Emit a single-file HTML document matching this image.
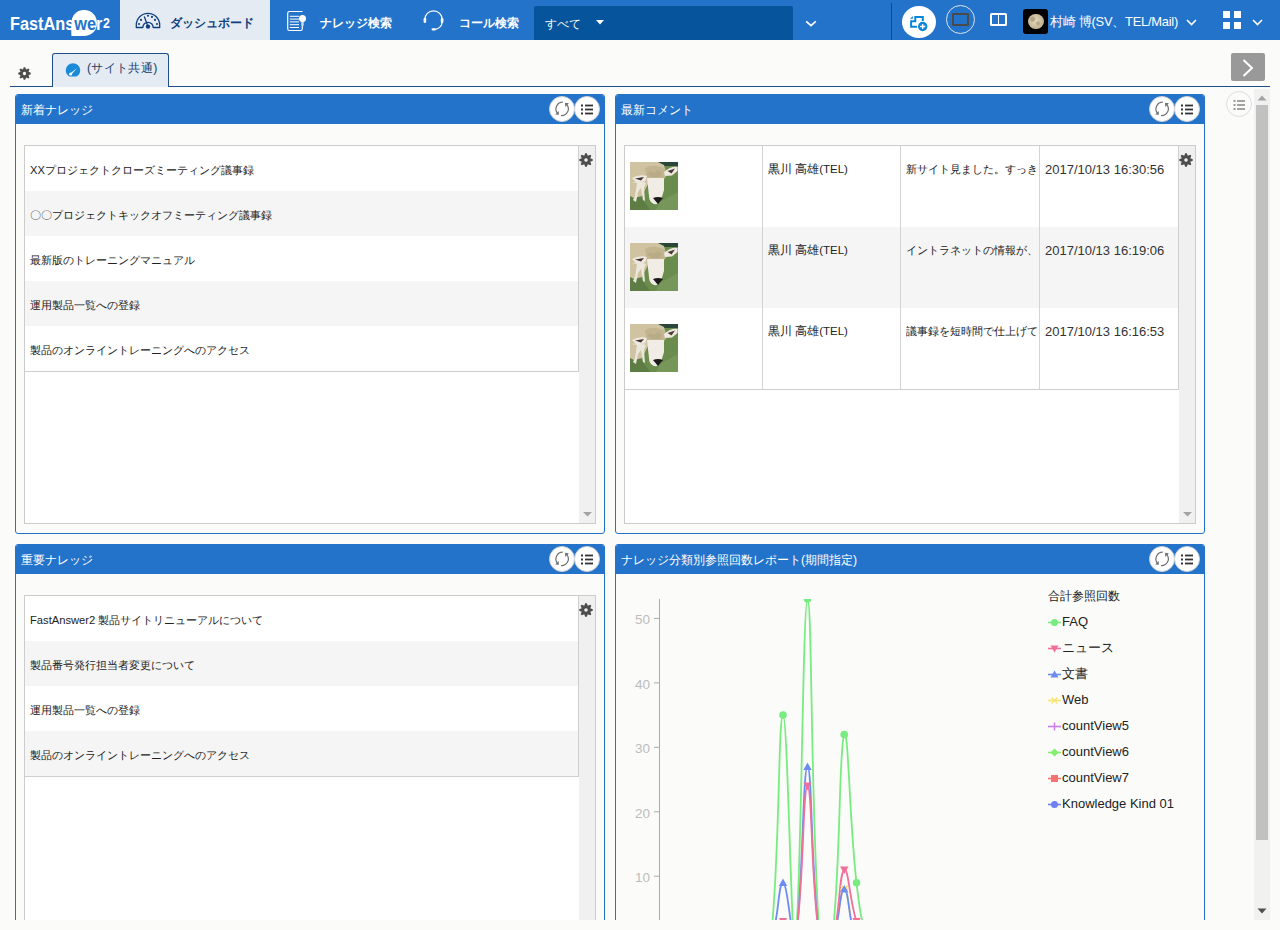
<!DOCTYPE html>
<html><head><meta charset="utf-8">
<style>
*{box-sizing:border-box;margin:0;padding:0}
html,body{width:1280px;height:930px;overflow:hidden;background:#fbfbf9;font-family:"Liberation Sans",sans-serif;font-size:12px;color:#222}
.abs{position:absolute}
#hdr{position:absolute;left:0;top:0;width:1280px;height:40px;background:#2473ca}
#logo{left:0;top:0;width:120px;height:40px;background:#2473ca}
#dash{left:120px;top:0;width:150px;height:40px;background:#e4ebf3}
.navtxt{font-size:12.2px;font-weight:bold;color:#fff;white-space:nowrap}
#sel{left:534px;top:6px;width:259px;height:34px;background:#06549b;border-radius:2px 2px 0 0}
#tabline{left:10px;top:86px;width:1260px;height:1px;background:#1d4e87}
#tab{z-index:2;left:52px;top:53px;width:117px;height:34px;background:#e4ebf3;border:1px solid #1d4e87;border-bottom:none;border-radius:3px 3px 0 0}
#rbtn{left:1231px;top:53px;width:34px;height:28px;background:#999;border-radius:2px}
.panel{position:absolute;border:1px solid #2473ca;border-radius:3px;background:#fbfbf9;overflow:hidden}
.ph{position:absolute;left:0;top:0;right:0;height:29px;background:#2473ca;color:#fff;font-size:12.2px;line-height:30.5px;padding-left:5px;white-space:nowrap}
.cbtn{position:absolute;width:26px;height:26px;border-radius:50%;background:#fff;border:1px solid #cfcfcf}
.box{position:absolute;background:#fff;border:1px solid #ccc}
.row{position:absolute;left:0;height:45px;line-height:48px;padding-left:5px;font-size:11.2px;color:#222;white-space:nowrap}
.row.g{background:#f5f5f5}
.ct{font-size:11.6px;color:#222;white-space:nowrap}
.sb{position:absolute;top:0;bottom:0;width:16px;background:#f0f0f0}
</style></head><body>
<div id="hdr"></div>
<div class="abs" id="logo">
 <svg class="abs" style="left:0;top:0" width="120" height="40"><path d="M84 10 C92 10 97 16 97 23 C97 31 91 36 84 36 L71.5 36 C71 32 71.5 27 71.5 23 C71.5 16 76 10 84 10Z" fill="#fff"/></svg>
 <div class="abs" id="logotxt" style="left:9.5px;top:14px;font-size:18px;line-height:20px;font-weight:bold;color:#fff;white-space:nowrap;transform-origin:0 0;transform:scaleX(0.905)">FastAns<span style="color:#2473ca">we</span>r</div>
 <div class="abs" style="left:102.5px;top:15.5px;font-size:14.5px;line-height:14px;transform:scaleX(0.85);transform-origin:0 0;font-weight:bold;color:#fff">2</div>
</div>
<div class="abs" id="dash">
 <svg class="abs" style="left:15px;top:12px" width="26" height="18" viewBox="0 0 26 18"><path d="M1.3 15.5 V13 A11.7 11.7 0 0 1 24.7 13 V15.5 H18.2 A5.2 5.2 0 0 0 7.8 15.5 Z" fill="none" stroke="#0d3f7e" stroke-width="1.3" stroke-linejoin="round"/><circle cx="13" cy="14.6" r="2.2" fill="#0d3f7e"/><path d="M9.3 4.5 L13 14.6" stroke="#0d3f7e" stroke-width="1.3"/><circle cx="4" cy="12" r="1.05" fill="#0d3f7e"/><circle cx="6" cy="7.9" r="1.05" fill="#0d3f7e"/><circle cx="13" cy="3.8" r="1.05" fill="#0d3f7e"/><circle cx="17" cy="4.9" r="1.05" fill="#0d3f7e"/><circle cx="20" cy="7.9" r="1.05" fill="#0d3f7e"/><circle cx="22" cy="12" r="1.05" fill="#0d3f7e"/></svg>
 <div class="abs navtxt" style="left:50px;top:14.5px;font-size:12.4px;color:#0d3f7e">ダッシュボード</div>
</div>
<svg class="abs" style="left:280px;top:5px" width="30" height="30" viewBox="280 5 30 30"><path d="M302.5 11.5 H289.5 Q287.7 11.5 287.7 13.3 V28.7 Q287.7 30.5 289.5 30.5 H300.5 Q302.3 30.5 302.3 28.7 V26" fill="none" stroke="#fff" stroke-width="1.2"/><path d="M289.8 16.3H299M289.8 19.1H299M289.8 21.9H299M289.8 24.7H299M289.8 27.5H299" stroke="#fff" stroke-width="1"/><path d="M301.3 21 H303.7 V25.5 Q302.5 26.5 301.3 25.5Z" fill="#c9dcf2"/><circle cx="302.5" cy="18.4" r="3.5" fill="#fff"/></svg>
<div class="abs navtxt" style="left:320px;top:14.5px">ナレッジ検索</div>
<svg class="abs" style="left:420px;top:5px" width="28" height="30" viewBox="420 5 28 30"><path d="M424.8 19.5 A8.7 8.7 0 0 1 442.2 19.5 V22 A8.5 8.5 0 0 1 435.5 29.3" fill="none" stroke="#fff" stroke-width="1.3"/><rect x="423.6" y="18" width="2.6" height="5" rx="1.2" fill="#fff"/><rect x="440.8" y="18" width="2.6" height="5" rx="1.2" fill="#fff"/><rect x="431.5" y="28.2" width="4.5" height="2.2" rx="1.1" fill="#fff"/></svg>
<div class="abs navtxt" style="left:459px;top:15px">コール検索</div>
<div class="abs" id="sel">
 <div class="abs" style="left:11px;top:10px;font-size:12.2px;color:#fff;white-space:nowrap">すべて</div>
 <svg class="abs" style="left:62px;top:14px" width="8" height="5"><path d="M0 0H8L4 4.5Z" fill="#fff"/></svg>
</div>
<svg class="abs" style="left:805px;top:20px" width="12" height="8"><path d="M1.2 1.3L6 5.6L10.8 1.3" fill="none" stroke="#fff" stroke-width="1.7"/></svg>
<div class="abs" style="left:891px;top:3px;width:1px;height:37px;background:#124a86"></div>
<div class="abs" style="left:902px;top:5.5px;width:34px;height:32.5px;border-radius:50%;background:#fff"></div>
<svg class="abs" style="left:900px;top:4px" width="36" height="36" viewBox="900 4 36 36"><path d="M922.8 21 V17 H915.3 V21.3 H911.1 V26.8 H917" fill="none" stroke="#0b85d7" stroke-width="2"/><path d="M910.1 18.8 L912.8 16 V18.8 Z" fill="#0b85d7"/><circle cx="922.7" cy="26.5" r="4.7" fill="#0b85d7"/><path d="M920.1 26.5 H925.3 M922.7 23.9 V29.1" stroke="#fff" stroke-width="1.4"/></svg>
<div class="abs" style="left:946px;top:5px;width:29px;height:29px;border-radius:50%;border:1px solid #dde3ea"></div>
<div class="abs" style="left:952px;top:13px;width:17px;height:13px;border:2px solid #4a4a4a;border-radius:1px"></div>
<div class="abs" style="left:990px;top:13px;width:17px;height:13px;border:2px solid #fff;border-radius:1.5px"></div>
<div class="abs" style="left:997.8px;top:13px;width:1.5px;height:13px;background:#fff"></div>
<div class="abs" style="left:1023px;top:9px;width:25px;height:25px;border-radius:3px;background:#000"></div>
<div class="abs" style="left:1028px;top:13.5px;width:15.5px;height:15.5px;border-radius:50%;background:radial-gradient(circle at 30% 35%,rgba(150,140,110,.6) 0 12%,transparent 22%),radial-gradient(circle at 62% 62%,rgba(150,140,110,.5) 0 10%,transparent 20%),radial-gradient(circle at 45% 45%,#e6dcc0,#c2b593 65%,#8f8670)"></div>
<div class="abs" style="left:1050px;top:14px;font-size:12.9px;color:#fff;white-space:nowrap;letter-spacing:-0.25px">村崎 博(SV、TEL/Mail)</div>
<svg class="abs" style="left:1186px;top:19px" width="11" height="7"><path d="M1 1L5.5 5.5L10 1" fill="none" stroke="#fff" stroke-width="1.6"/></svg>
<div class="abs" style="left:1223px;top:11px;width:7px;height:7px;background:#fff"></div>
<div class="abs" style="left:1234px;top:11px;width:7px;height:7px;background:#fff"></div>
<div class="abs" style="left:1223px;top:22px;width:7px;height:7px;background:#fff"></div>
<div class="abs" style="left:1234px;top:22px;width:7px;height:7px;background:#fff"></div>
<svg class="abs" style="left:1252px;top:19px" width="11" height="7"><path d="M1 1L5.5 5.5L10 1" fill="none" stroke="#fff" stroke-width="1.6"/></svg>
<div class="abs" id="tab">
 <svg class="abs" style="left:12px;top:8.5px" width="16" height="14" viewBox="0 0 16 14"><path d="M2.2 11.6 A7.2 7.2 0 1 1 13.8 11.6 Q12.5 13.4 11 13.6 H5 Q3.5 13.4 2.2 11.6Z" fill="#1b8ad9"/><path d="M5.2 10.6 L11.8 5.2 L6.4 11.6Z" fill="#fff"/><circle cx="5.6" cy="11" r="1.5" fill="#fff"/></svg>
 <div class="abs" style="left:34px;top:6px;font-size:12.3px;letter-spacing:0.35px;color:#1b3a66;white-space:nowrap">(サイト共通)</div>
</div>
<svg class="abs" style="left:18px;top:67px" width="13" height="13" viewBox="0 0 14 14"><path fill="#4d4d4d" fill-rule="evenodd" d="M5.24 2.75L6.17 0.25L7.83 0.25L8.76 2.75L11.19 1.64L12.36 2.81L11.25 5.24L13.75 6.17L13.75 7.83L11.25 8.76L12.36 11.19L11.19 12.36L8.76 11.25L7.83 13.75L6.17 13.75L5.24 11.25L2.81 12.36L1.64 11.19L2.75 8.76L0.25 7.83L0.25 6.17L2.75 5.24L1.64 2.81L2.81 1.64ZM7 5.2A1.8 1.8 0 1 0 7 8.8A1.8 1.8 0 1 0 7 5.2Z"/></svg>
<div class="abs" id="tabline"></div>
<div class="abs" id="rbtn"><svg class="abs" style="left:11px;top:6px" width="12" height="18"><path d="M1.5 1L10 9L1.5 17" fill="none" stroke="#fff" stroke-width="2"/></svg></div>
<div class="abs" style="left:1226px;top:91px;width:26px;height:26px;border-radius:50%;border:1px solid #ddd;background:#fbfbf9"><svg class="abs" style="left:6px;top:8px" width="13" height="10" viewBox="0 0 13 10"><rect x="0.5" y="0" width="2" height="2" fill="#999"/><rect x="0.5" y="4" width="2" height="2" fill="#999"/><rect x="0.5" y="8" width="2" height="2" fill="#999"/><rect x="4" y="0.1" width="8" height="1.8" fill="#999"/><rect x="4" y="4.1" width="8" height="1.8" fill="#999"/><rect x="4" y="8.1" width="8" height="1.8" fill="#999"/></svg></div>
<div class="abs" style="left:1254px;top:89px;width:16px;height:831px;background:#f1f1f1"></div>
<svg class="abs" style="left:1257px;top:95px" width="10" height="6"><path d="M0.5 5.5H9.5L5 0.5Z" fill="#a3a3a3"/></svg>
<div class="abs" style="left:1256px;top:105px;width:12px;height:735px;background:#c1c1c1"></div>
<svg class="abs" style="left:1257px;top:908px" width="10" height="6"><path d="M0.5 0.5H9.5L5 5.5Z" fill="#505050"/></svg>

<div class="panel" style="left:15px;top:94px;width:590px;height:440px">
 <div class="ph">新着ナレッジ<div class="cbtn" style="left:533px;top:1px"><svg class="abs" style="left:4px;top:4px" width="16" height="16" viewBox="0 0 16 16"><path d="M8.8 1.1 A6.8 6.8 0 0 0 3.4 12.1" fill="none" stroke="#707070" stroke-width="1.2"/><path d="M1.1 13.6 L4.6 9.9 L4.9 13.8Z" fill="#707070"/><path d="M6.9 14.6 A6.8 6.8 0 0 0 12.5 3.2" fill="none" stroke="#707070" stroke-width="1.2"/><path d="M11.1 1.8 L14.9 2.2 L11.2 5.9Z" fill="#707070"/></svg></div>
<div class="cbtn" style="left:558px;top:1px"><svg class="abs" style="left:6px;top:7px" width="13" height="11" viewBox="0 0 13 11"><rect x="0" y="0.5" width="2" height="2" fill="#333"/><rect x="0" y="4.5" width="2" height="2" fill="#333"/><rect x="0" y="8.5" width="2" height="2" fill="#333"/><rect x="4" y="0.6" width="8" height="1.8" fill="#333"/><rect x="4" y="4.6" width="8" height="1.8" fill="#333"/><rect x="4" y="8.6" width="8" height="1.8" fill="#333"/></svg></div></div>
 <div class="box" style="left:8px;top:50px;width:572px;height:379px">
  <div class="row" style="top:0px;width:553px">XXプロジェクトクローズミーティング議事録</div>
<div class="row g" style="top:45px;width:553px">〇〇プロジェクトキックオフミーティング議事録</div>
<div class="row" style="top:90px;width:553px">最新版のトレーニングマニュアル</div>
<div class="row g" style="top:135px;width:553px">運用製品一覧への登録</div>
<div class="row" style="top:180px;width:553px">製品のオンライントレーニングへのアクセス</div>
<div class="abs" style="left:0;top:225px;width:554px;height:1px;background:#cfcfcf"></div><div class="abs" style="left:553px;top:0;width:1px;height:226px;background:#cfcfcf"></div>

  <div class="sb" style="left:554px"></div>
  <svg class="abs" style="left:554px;top:7px" width="14" height="14" viewBox="0 0 14 14"><path fill="#4d4d4d" fill-rule="evenodd" d="M5.24 2.75L6.17 0.25L7.83 0.25L8.76 2.75L11.19 1.64L12.36 2.81L11.25 5.24L13.75 6.17L13.75 7.83L11.25 8.76L12.36 11.19L11.19 12.36L8.76 11.25L7.83 13.75L6.17 13.75L5.24 11.25L2.81 12.36L1.64 11.19L2.75 8.76L0.25 7.83L0.25 6.17L2.75 5.24L1.64 2.81L2.81 1.64ZM7 5.2A1.8 1.8 0 1 0 7 8.8A1.8 1.8 0 1 0 7 5.2Z"/></svg>
  <svg class="abs" style="left:558px;top:366px" width="9" height="5"><path d="M0 0H9L4.5 4.5Z" fill="#a3a3a3"/></svg>
 </div>
</div>
<div class="panel" style="left:615px;top:94px;width:590px;height:440px">
 <div class="ph">最新コメント<div class="cbtn" style="left:533px;top:1px"><svg class="abs" style="left:4px;top:4px" width="16" height="16" viewBox="0 0 16 16"><path d="M8.8 1.1 A6.8 6.8 0 0 0 3.4 12.1" fill="none" stroke="#707070" stroke-width="1.2"/><path d="M1.1 13.6 L4.6 9.9 L4.9 13.8Z" fill="#707070"/><path d="M6.9 14.6 A6.8 6.8 0 0 0 12.5 3.2" fill="none" stroke="#707070" stroke-width="1.2"/><path d="M11.1 1.8 L14.9 2.2 L11.2 5.9Z" fill="#707070"/></svg></div>
<div class="cbtn" style="left:558px;top:1px"><svg class="abs" style="left:6px;top:7px" width="13" height="11" viewBox="0 0 13 11"><rect x="0" y="0.5" width="2" height="2" fill="#333"/><rect x="0" y="4.5" width="2" height="2" fill="#333"/><rect x="0" y="8.5" width="2" height="2" fill="#333"/><rect x="4" y="0.6" width="8" height="1.8" fill="#333"/><rect x="4" y="4.6" width="8" height="1.8" fill="#333"/><rect x="4" y="8.6" width="8" height="1.8" fill="#333"/></svg></div></div>
 <div class="box" style="left:8px;top:50px;width:572px;height:379px">
  <div class="abs" style="left:0;top:0px;width:553px;height:81px;background:#fff"><svg class="abs" style="left:5px;top:16px" width="48" height="48" viewBox="0 0 48 48"><rect width="48" height="48" fill="#6a8c4c"/><path d="M0 30L10 34L20 48H0Z" fill="#5e7d45"/><path d="M30 40L48 30V48H26Z" fill="#77975a"/><rect x="27" y="0" width="21" height="4" fill="#2a4638"/><path d="M0 0H28L34 3L36 10L34 18L18 22L12 34L4 36L0 34Z" fill="#cfc3a1"/><path d="M15 6Q24 1 35 7L36 15L30 19L17 18Z" fill="#c2b48e"/><path d="M2 20L7 21L5 34L3 38L6 40L8 30L11 26L13 38L15 39L14 26L16 21L10 19Z" fill="#ebe7dc"/><path d="M17 16L34 16L34 28L31 38Q28 43 24 42Q19 40 19 34Z" fill="#f1ede6"/><path d="M34 10Q41 4 47.5 5V9L42 13.5L35 14Z" fill="#efe9e2"/><path d="M37.5 9L45 6.5L41.5 11.5Z" fill="#4c3c35"/><path d="M2 16Q9 12 17 14L15 19.5L6 20Z" fill="#efe9e2"/><path d="M5 16.5L14 15L11 18.5Z" fill="#3e302a"/><path d="M23 36Q28 34 33 36L28 42Z" fill="#1a1a1a"/><path d="M17 12L20 9L24 11L28 8L32 11L30 15L22 15Z" fill="#b9ab86"/></svg>
<div class="abs ct" style="left:143px;top:16px;font-size:11.5px">黒川 高雄(TEL)</div>
<div class="abs ct" style="left:281px;top:16px;width:132px;overflow:hidden;font-size:11px">新サイト見ました。すっきり</div>
<div class="abs ct" style="left:420px;top:15.5px;font-size:13px;letter-spacing:0px;color:#333">2017/10/13 16:30:56</div></div>
<div class="abs" style="left:0;top:81px;width:553px;height:81px;background:#f5f5f5"><svg class="abs" style="left:5px;top:16px" width="48" height="48" viewBox="0 0 48 48"><rect width="48" height="48" fill="#6a8c4c"/><path d="M0 30L10 34L20 48H0Z" fill="#5e7d45"/><path d="M30 40L48 30V48H26Z" fill="#77975a"/><rect x="27" y="0" width="21" height="4" fill="#2a4638"/><path d="M0 0H28L34 3L36 10L34 18L18 22L12 34L4 36L0 34Z" fill="#cfc3a1"/><path d="M15 6Q24 1 35 7L36 15L30 19L17 18Z" fill="#c2b48e"/><path d="M2 20L7 21L5 34L3 38L6 40L8 30L11 26L13 38L15 39L14 26L16 21L10 19Z" fill="#ebe7dc"/><path d="M17 16L34 16L34 28L31 38Q28 43 24 42Q19 40 19 34Z" fill="#f1ede6"/><path d="M34 10Q41 4 47.5 5V9L42 13.5L35 14Z" fill="#efe9e2"/><path d="M37.5 9L45 6.5L41.5 11.5Z" fill="#4c3c35"/><path d="M2 16Q9 12 17 14L15 19.5L6 20Z" fill="#efe9e2"/><path d="M5 16.5L14 15L11 18.5Z" fill="#3e302a"/><path d="M23 36Q28 34 33 36L28 42Z" fill="#1a1a1a"/><path d="M17 12L20 9L24 11L28 8L32 11L30 15L22 15Z" fill="#b9ab86"/></svg>
<div class="abs ct" style="left:143px;top:16px;font-size:11.5px">黒川 高雄(TEL)</div>
<div class="abs ct" style="left:281px;top:16px;width:132px;overflow:hidden;font-size:11px">イントラネットの情報が、すぐ</div>
<div class="abs ct" style="left:420px;top:15.5px;font-size:13px;letter-spacing:0px;color:#333">2017/10/13 16:19:06</div></div>
<div class="abs" style="left:0;top:162px;width:553px;height:81px;background:#fff"><svg class="abs" style="left:5px;top:16px" width="48" height="48" viewBox="0 0 48 48"><rect width="48" height="48" fill="#6a8c4c"/><path d="M0 30L10 34L20 48H0Z" fill="#5e7d45"/><path d="M30 40L48 30V48H26Z" fill="#77975a"/><rect x="27" y="0" width="21" height="4" fill="#2a4638"/><path d="M0 0H28L34 3L36 10L34 18L18 22L12 34L4 36L0 34Z" fill="#cfc3a1"/><path d="M15 6Q24 1 35 7L36 15L30 19L17 18Z" fill="#c2b48e"/><path d="M2 20L7 21L5 34L3 38L6 40L8 30L11 26L13 38L15 39L14 26L16 21L10 19Z" fill="#ebe7dc"/><path d="M17 16L34 16L34 28L31 38Q28 43 24 42Q19 40 19 34Z" fill="#f1ede6"/><path d="M34 10Q41 4 47.5 5V9L42 13.5L35 14Z" fill="#efe9e2"/><path d="M37.5 9L45 6.5L41.5 11.5Z" fill="#4c3c35"/><path d="M2 16Q9 12 17 14L15 19.5L6 20Z" fill="#efe9e2"/><path d="M5 16.5L14 15L11 18.5Z" fill="#3e302a"/><path d="M23 36Q28 34 33 36L28 42Z" fill="#1a1a1a"/><path d="M17 12L20 9L24 11L28 8L32 11L30 15L22 15Z" fill="#b9ab86"/></svg>
<div class="abs ct" style="left:143px;top:16px;font-size:11.5px">黒川 高雄(TEL)</div>
<div class="abs ct" style="left:281px;top:16px;width:132px;overflow:hidden;font-size:11px">議事録を短時間で仕上げて</div>
<div class="abs ct" style="left:420px;top:15.5px;font-size:13px;letter-spacing:0px;color:#333">2017/10/13 16:16:53</div></div>
<div class="abs" style="left:0;top:243px;width:554px;height:1px;background:#cfcfcf"></div><div class="abs" style="left:553px;top:0;width:1px;height:244px;background:#cfcfcf"></div>
<div class="abs" style="left:137px;top:0;width:1px;height:243px;background:#d4d4d4"></div>
<div class="abs" style="left:275px;top:0;width:1px;height:243px;background:#d4d4d4"></div>
<div class="abs" style="left:414px;top:0;width:1px;height:243px;background:#d4d4d4"></div>

  <div class="sb" style="left:554px"></div>
  <svg class="abs" style="left:554px;top:7px" width="14" height="14" viewBox="0 0 14 14"><path fill="#4d4d4d" fill-rule="evenodd" d="M5.24 2.75L6.17 0.25L7.83 0.25L8.76 2.75L11.19 1.64L12.36 2.81L11.25 5.24L13.75 6.17L13.75 7.83L11.25 8.76L12.36 11.19L11.19 12.36L8.76 11.25L7.83 13.75L6.17 13.75L5.24 11.25L2.81 12.36L1.64 11.19L2.75 8.76L0.25 7.83L0.25 6.17L2.75 5.24L1.64 2.81L2.81 1.64ZM7 5.2A1.8 1.8 0 1 0 7 8.8A1.8 1.8 0 1 0 7 5.2Z"/></svg>
  <svg class="abs" style="left:558px;top:366px" width="9" height="5"><path d="M0 0H9L4.5 4.5Z" fill="#a3a3a3"/></svg>
 </div>
</div>
<div class="panel" style="left:15px;top:544px;width:590px;height:400px">
 <div class="ph">重要ナレッジ<div class="cbtn" style="left:533px;top:1px"><svg class="abs" style="left:4px;top:4px" width="16" height="16" viewBox="0 0 16 16"><path d="M8.8 1.1 A6.8 6.8 0 0 0 3.4 12.1" fill="none" stroke="#707070" stroke-width="1.2"/><path d="M1.1 13.6 L4.6 9.9 L4.9 13.8Z" fill="#707070"/><path d="M6.9 14.6 A6.8 6.8 0 0 0 12.5 3.2" fill="none" stroke="#707070" stroke-width="1.2"/><path d="M11.1 1.8 L14.9 2.2 L11.2 5.9Z" fill="#707070"/></svg></div>
<div class="cbtn" style="left:558px;top:1px"><svg class="abs" style="left:6px;top:7px" width="13" height="11" viewBox="0 0 13 11"><rect x="0" y="0.5" width="2" height="2" fill="#333"/><rect x="0" y="4.5" width="2" height="2" fill="#333"/><rect x="0" y="8.5" width="2" height="2" fill="#333"/><rect x="4" y="0.6" width="8" height="1.8" fill="#333"/><rect x="4" y="4.6" width="8" height="1.8" fill="#333"/><rect x="4" y="8.6" width="8" height="1.8" fill="#333"/></svg></div></div>
 <div class="box" style="left:8px;top:50px;width:572px;height:400px">
  <div class="row" style="top:0px;width:553px">FastAnswer2 製品サイトリニューアルについて</div>
<div class="row g" style="top:45px;width:553px">製品番号発行担当者変更について</div>
<div class="row" style="top:90px;width:553px">運用製品一覧への登録</div>
<div class="row g" style="top:135px;width:553px">製品のオンライントレーニングへのアクセス</div>
<div class="abs" style="left:0;top:180px;width:554px;height:1px;background:#cfcfcf"></div><div class="abs" style="left:553px;top:0;width:1px;height:181px;background:#cfcfcf"></div>

  <div class="sb" style="left:554px"></div>
  <svg class="abs" style="left:554px;top:7px" width="14" height="14" viewBox="0 0 14 14"><path fill="#4d4d4d" fill-rule="evenodd" d="M5.24 2.75L6.17 0.25L7.83 0.25L8.76 2.75L11.19 1.64L12.36 2.81L11.25 5.24L13.75 6.17L13.75 7.83L11.25 8.76L12.36 11.19L11.19 12.36L8.76 11.25L7.83 13.75L6.17 13.75L5.24 11.25L2.81 12.36L1.64 11.19L2.75 8.76L0.25 7.83L0.25 6.17L2.75 5.24L1.64 2.81L2.81 1.64ZM7 5.2A1.8 1.8 0 1 0 7 8.8A1.8 1.8 0 1 0 7 5.2Z"/></svg>
 </div>
</div>
<div class="panel" style="left:615px;top:544px;width:590px;height:400px">
 <div class="ph">ナレッジ分類別参照回数レポート(期間指定)<div class="cbtn" style="left:533px;top:1px"><svg class="abs" style="left:4px;top:4px" width="16" height="16" viewBox="0 0 16 16"><path d="M8.8 1.1 A6.8 6.8 0 0 0 3.4 12.1" fill="none" stroke="#707070" stroke-width="1.2"/><path d="M1.1 13.6 L4.6 9.9 L4.9 13.8Z" fill="#707070"/><path d="M6.9 14.6 A6.8 6.8 0 0 0 12.5 3.2" fill="none" stroke="#707070" stroke-width="1.2"/><path d="M11.1 1.8 L14.9 2.2 L11.2 5.9Z" fill="#707070"/></svg></div>
<div class="cbtn" style="left:558px;top:1px"><svg class="abs" style="left:6px;top:7px" width="13" height="11" viewBox="0 0 13 11"><rect x="0" y="0.5" width="2" height="2" fill="#333"/><rect x="0" y="4.5" width="2" height="2" fill="#333"/><rect x="0" y="8.5" width="2" height="2" fill="#333"/><rect x="4" y="0.6" width="8" height="1.8" fill="#333"/><rect x="4" y="4.6" width="8" height="1.8" fill="#333"/><rect x="4" y="8.6" width="8" height="1.8" fill="#333"/></svg></div></div>
 </div>
<svg class="abs" style="left:615px;top:574px" width="590" height="346" viewBox="615 574 590 346"><defs><clipPath id="cp"><rect x="659" y="599" width="380" height="321"/></clipPath></defs><line x1="659.5" y1="599" x2="659.5" y2="920" stroke="#aaa" stroke-width="1"/><line x1="654" y1="618.4" x2="659" y2="618.4" stroke="#aaa" stroke-width="1"/><text x="650" y="624.4" text-anchor="end" font-family="Liberation Sans" font-size="13.5" fill="#bdbdbd">50</text><line x1="654" y1="682.9" x2="659" y2="682.9" stroke="#aaa" stroke-width="1"/><text x="650" y="688.9" text-anchor="end" font-family="Liberation Sans" font-size="13.5" fill="#bdbdbd">40</text><line x1="654" y1="747.3" x2="659" y2="747.3" stroke="#aaa" stroke-width="1"/><text x="650" y="753.3" text-anchor="end" font-family="Liberation Sans" font-size="13.5" fill="#bdbdbd">30</text><line x1="654" y1="811.8" x2="659" y2="811.8" stroke="#aaa" stroke-width="1"/><text x="650" y="817.8" text-anchor="end" font-family="Liberation Sans" font-size="13.5" fill="#bdbdbd">20</text><line x1="654" y1="876.2" x2="659" y2="876.2" stroke="#aaa" stroke-width="1"/><text x="650" y="882.2" text-anchor="end" font-family="Liberation Sans" font-size="13.5" fill="#bdbdbd">10</text><g clip-path="url(#cp)"><path d="M758.50 940.70C763.40 940.70 765.85 940.70 770.75 940.70C775.65 940.70 778.10 940.70 783.00 940.70C787.90 940.70 790.35 940.70 795.25 940.70C800.15 940.70 802.60 940.70 807.50 940.70C812.40 940.70 814.85 940.70 819.75 940.70C824.65 940.70 830.16 944.57 832.00 940.70C839.96 923.95 839.35 889.13 844.25 889.13C849.15 889.13 848.54 923.95 856.50 940.70C858.34 944.57 863.85 940.70 868.75 940.70C873.65 940.70 876.10 940.70 881.00 940.70" fill="none" stroke="#f9e36a" stroke-width="1.8" stroke-linejoin="round"/><path d="M758.50 940.70C763.40 940.70 770.25 945.34 770.75 940.70C780.05 855.10 778.10 715.09 783.00 715.09C787.90 715.09 791.35 959.17 795.25 940.70C801.15 912.76 802.60 599.06 807.50 599.06C812.40 599.06 810.29 808.77 819.75 940.70C820.09 945.43 831.45 945.32 832.00 940.70C841.25 862.81 838.55 747.92 844.25 734.43C848.35 724.71 849.49 823.69 856.50 882.69C859.29 906.20 860.63 921.47 868.75 940.70C870.43 944.67 876.10 940.70 881.00 940.70" fill="none" stroke="#78ec80" stroke-width="1.8" stroke-linejoin="round"/><path d="M758.50 940.70C763.40 940.70 769.07 944.67 770.75 940.70C778.87 921.47 778.10 882.69 783.00 882.69C787.90 882.69 792.76 952.47 795.25 940.70C802.56 906.06 802.60 766.66 807.50 766.66C812.40 766.66 810.59 875.65 819.75 940.70C820.39 945.27 830.16 944.57 832.00 940.70C839.96 923.95 839.35 889.13 844.25 889.13C849.15 889.13 848.54 923.95 856.50 940.70C858.34 944.57 863.85 940.70 868.75 940.70C873.65 940.70 876.10 940.70 881.00 940.70" fill="none" stroke="#6d8cf2" stroke-width="1.8" stroke-linejoin="round"/><path d="M758.50 940.70C763.40 940.70 767.33 943.40 770.75 940.70C777.13 935.66 778.10 921.36 783.00 921.36C787.90 921.36 793.99 947.66 795.25 940.70C803.79 893.51 802.60 786.00 807.50 786.00C812.40 786.00 810.67 883.35 819.75 940.70C820.47 945.23 830.57 944.83 832.00 940.70C840.37 916.46 838.61 874.25 844.25 869.79C848.41 866.51 849.66 901.55 856.50 921.36C859.46 929.92 862.37 935.66 868.75 940.70C872.17 943.40 876.10 940.70 881.00 940.70" fill="none" stroke="#f0709a" stroke-width="1.8" stroke-linejoin="round"/><path d="M840.75 885.63L847.75 892.63M847.75 885.63L840.75 892.63M840.25 889.13H848.25" stroke="#f9e36a" stroke-width="1.5"/><circle cx="783.00" cy="715.09" r="3.8" fill="#78ec80"/><circle cx="807.50" cy="599.06" r="3.8" fill="#78ec80"/><circle cx="844.25" cy="734.43" r="3.8" fill="#78ec80"/><circle cx="856.50" cy="882.69" r="3.8" fill="#78ec80"/><path d="M778.80 886.09L787.20 886.09L783.00 878.49Z" fill="#6d8cf2"/><path d="M803.30 770.06L811.70 770.06L807.50 762.46Z" fill="#6d8cf2"/><path d="M840.05 892.53L848.45 892.53L844.25 884.93Z" fill="#6d8cf2"/><path d="M778.80 917.96L787.20 917.96L783.00 925.56Z" fill="#f0709a"/><path d="M803.30 782.60L811.70 782.60L807.50 790.20Z" fill="#f0709a"/><path d="M840.05 866.39L848.45 866.39L844.25 873.99Z" fill="#f0709a"/><path d="M852.30 917.96L860.70 917.96L856.50 925.56Z" fill="#f0709a"/></g><text x="1048" y="600" font-family="Liberation Sans" font-size="12" fill="#222">合計参照回数</text><line x1="1048" y1="622.5" x2="1061" y2="622.5" stroke="#78ec80" stroke-width="1.6"/><circle cx="1054.5" cy="622.5" r="3.5" fill="#78ec80"/><text x="1062" y="625.8" font-family="Liberation Sans" font-size="13" fill="#222">FAQ</text><line x1="1048" y1="648.5" x2="1061" y2="648.5" stroke="#f0709a" stroke-width="1.6"/><path d="M1050.5 645.5L1058.5 645.5L1054.5 652.5Z" fill="#f0709a"/><text x="1062" y="651.8" font-family="Liberation Sans" font-size="13" fill="#222">ニュース</text><line x1="1048" y1="674.5" x2="1061" y2="674.5" stroke="#6d8cf2" stroke-width="1.6"/><path d="M1050.5 677.5L1058.5 677.5L1054.5 670.5Z" fill="#6d8cf2"/><text x="1062" y="677.8" font-family="Liberation Sans" font-size="13" fill="#222">文書</text><line x1="1048" y1="700.5" x2="1061" y2="700.5" stroke="#f9e36a" stroke-width="1.6"/><path d="M1051.5 697.5L1057.5 703.5M1057.5 697.5L1051.5 703.5" stroke="#f9e36a" stroke-width="1.3"/><text x="1062" y="703.8" font-family="Liberation Sans" font-size="13" fill="#222">Web</text><line x1="1048" y1="726.5" x2="1061" y2="726.5" stroke="#c77df0" stroke-width="1.6"/><path d="M1054.5 722.5V730.5" stroke="#c77df0" stroke-width="1.5"/><text x="1062" y="729.8" font-family="Liberation Sans" font-size="13" fill="#222">countView5</text><line x1="1048" y1="752.5" x2="1061" y2="752.5" stroke="#84ec6e" stroke-width="1.6"/><path d="M1054.5 748.5L1058.5 752.5L1054.5 756.5L1050.5 752.5Z" fill="#84ec6e"/><text x="1062" y="755.8" font-family="Liberation Sans" font-size="13" fill="#222">countView6</text><line x1="1048" y1="778.5" x2="1061" y2="778.5" stroke="#f47272" stroke-width="1.6"/><rect x="1051.0" y="775.0" width="7" height="7" fill="#f47272"/><text x="1062" y="781.8" font-family="Liberation Sans" font-size="13" fill="#222">countView7</text><line x1="1048" y1="804.5" x2="1061" y2="804.5" stroke="#6e7ff0" stroke-width="1.6"/><circle cx="1054.5" cy="804.5" r="3.5" fill="#6e7ff0"/><text x="1062" y="807.8" font-family="Liberation Sans" font-size="13" fill="#222">Knowledge Kind 01</text></svg>
<div class="abs" style="left:0;top:920px;width:1280px;height:10px;background:#fbfbf9"></div>
</body></html>
